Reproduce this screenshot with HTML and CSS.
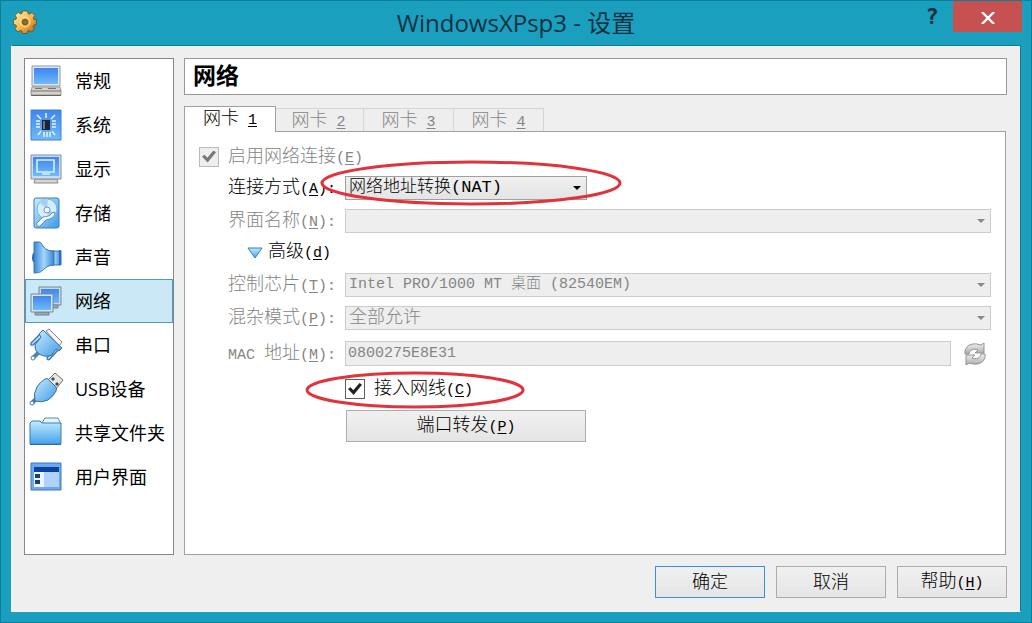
FILE: index.html
```
<!DOCTYPE html>
<html lang="zh-CN">
<head>
    <meta charset="UTF-8">
    <meta name="viewport" content="width=device-width, initial-scale=1.0">
    <title>WindowsXPsp3 - 设置</title>
    <link rel="stylesheet" href="styles.css">
</head>
<body>
    <!-- gradients shared by the icons -->
    <svg class="defs" width="0" height="0" aria-hidden="true">
        <defs>
            <linearGradient id="blue" x1="0" y1="0" x2="0" y2="1">
                <stop offset="0" stop-color="#3f86ec"/>
                <stop offset="1" stop-color="#6fb9fb"/>
            </linearGradient>
            <linearGradient id="sky" x1="0" y1="0" x2="1" y2="1">
                <stop offset="0" stop-color="#c9ecff"/>
                <stop offset="1" stop-color="#3f9ae8"/>
            </linearGradient>
            <linearGradient id="folder" x1="0" y1="0" x2="0" y2="1">
                <stop offset="0" stop-color="#c2eafe"/>
                <stop offset="1" stop-color="#45a4ee"/>
            </linearGradient>
            <linearGradient id="horn" x1="0" y1="0" x2="1" y2="0">
                <stop offset="0" stop-color="#3f86d2"/>
                <stop offset="0.5" stop-color="#a3d8fb"/>
                <stop offset="1" stop-color="#3b86d4"/>
            </linearGradient>
            <linearGradient id="gold" x1="0" y1="0" x2="1" y2="1">
                <stop offset="0" stop-color="#fff0bc"/>
                <stop offset="0.5" stop-color="#f8b94e"/>
                <stop offset="1" stop-color="#b95b10"/>
            </linearGradient>
            <linearGradient id="silver" x1="0" y1="0" x2="0" y2="1">
                <stop offset="0" stop-color="#f2f2f2"/>
                <stop offset="1" stop-color="#aaa"/>
            </linearGradient>
        </defs>
    </svg>

    <div class="window">
        <header class="titlebar">
            <svg class="app-icon" viewBox="0 0 24 24">
                <g fill="url(#gold)" stroke="#70420f" stroke-width="0.8">
                    <path d="M9.500 1h5l.5 2.600 1.500.6L19 2.500 22 5.500l-1.700 2.300.6 1.600 2.500.5v4.800l-2.500.5-.7 1.600L21.500 19l-3 3-2.300-1.500-1.600.7-.6 2.300H9.500l-.6-2.400-1.600-.7L5 22l-3-3.200 1.500-2.200-.7-1.600-2.300-.5V9.800L3 9.200l.6-1.500L2 5.300 5.200 2.300l2.300 1.600 1.500-.6z"/>
                    <circle cx="12" cy="12" r="2.800" fill="#7b7440"/>
                </g>
                <circle cx="12" cy="12" r="5" fill="none" stroke="#ffe3a0" stroke-width="1"/>
            </svg>
            <h1>WindowsXPsp3 - 设置</h1>
            <div class="window-buttons">
                <button class="help" aria-label="帮助">?</button>
                <button class="close" aria-label="关闭">
                    <svg width="14" height="12" viewBox="0 0 14 12"><path d="M1 0l12 12M13 0L1 12" stroke="#fff" stroke-width="2.400"/></svg>
                </button>
            </div>
        </header>

        <div class="content">
            <div class="columns">
                <nav class="sidebar">
                    <a href="#">
                        <svg viewBox="0 0 32 32">
                            <path d="M2 1h28v20H2z" fill="#dce9f6" stroke="#8999ab"/>
                            <path d="M4 3h24v16H4z" fill="url(#blue)"/>
                            <path d="M2 22h28l1 4v4H1v-4z" fill="#d4d0cb" stroke="#9a9793"/>
                            <path d="M1 26h30M5 23.500h7M18 23.500h8" stroke="#77736f"/>
                            <path d="M1 30.500h30" stroke="#66625e"/>
                        </svg>常规</a>
                    <a href="#">
                        <svg viewBox="0 0 32 32">
                            <path d="M1 1h30v30H1z" fill="url(#blue)" stroke="#3c83c8"/>
                            <path d="M12 11h8v10h-8z" fill="#1d2530"/>
                            <path d="M13 12h2v8h-2z" fill="#6a7580"/>
                            <path d="M6 12h4M6 15h4M6 18h4M22 12h4M22 15h4M22 18h4M16 4v5M14 23v5M17 23v5M20 23v5M7 6l4 4M25 6l-4 4M8 26l3-4M25 26l-3-4" stroke="#e4f5ff" stroke-width="1.500"/>
                        </svg>系统</a>
                    <a href="#">
                        <svg viewBox="0 0 32 32">
                            <path d="M5 26h22l1 4H4z" fill="#d8d5cf" stroke="#8c8983"/>
                            <path d="M1 2h30v24H1z" fill="#cbdcef" stroke="#7c91a9"/>
                            <path d="M3 4h26v19H3z" fill="url(#blue)"/>
                            <path d="M7 7h17v12H7zM12 21h8" fill="none" stroke="#d9efff" stroke-width="1.600"/>
                        </svg>显示</a>
                    <a href="#">
                        <svg viewBox="0 0 32 32">
                            <rect x="4" y="1" width="25" height="30" rx="2" fill="url(#sky)" stroke="#397fb9"/>
                            <circle cx="17" cy="12" r="10" fill="#d6edfb" stroke="#72b5e5"/>
                            <path d="M17 12L9 5a10 10 0 0 1 9-3zM17 12l9 5a10 10 0 0 1-7 5z" fill="#a5d2f3"/>
                            <circle cx="17" cy="13" r="3" fill="#fff" stroke="#579bd4"/>
                            <path d="M25 15c0 5-4 7-9 8l-6 6c-2 1-4-1-3-3l6-6c4-1 6 0 9-4z" fill="#eef8ff" stroke="#568fc0"/>
                        </svg>存储</a>
                    <a href="#">
                        <svg viewBox="0 0 32 32">
                            <path d="M4 12v9H3q-2-4 0-9z" fill="#246bb8"/>
                            <path d="M18 10h13v14H18z" fill="url(#horn)" stroke="#3776b5"/>
                            <path d="M4 1h5c2 0 3 2 4 4 2 3 5 5 11 5v14c-5 0-8 2-11 5-2 2-4 3-9 3z" fill="url(#horn)" stroke="#3776b5"/>
                            <path d="M29 9h2v15h-2z" fill="#2b72bd"/>
                        </svg>声音</a>
                    <a href="#" class="active">
                        <svg viewBox="0 0 32 32">
                            <path d="M9 2h22v18H9z" fill="#ccd9e5" stroke="#71899e"/>
                            <path d="M11 4h18v14H11z" fill="url(#blue)"/>
                            <path d="M21 20h7v3h-7zM5 27h14v3H5z" fill="#9ba9b4" stroke="#73818e"/>
                            <path d="M1 9h22v18H1z" fill="#d8e5f0" stroke="#71899e"/>
                            <path d="M3 11h18v14H3z" fill="url(#blue)"/>
                        </svg>网络</a>
                    <a href="#">
                        <svg viewBox="0 0 32 32">
                            <path d="M16 2l3-2 13 13-3 4z" fill="#f4f4f4" stroke="#858585"/>
                            <path d="M10 5L1 14q-1 3 2 2l8-7M29 20l-9 10q-3 2-3-1l8-10" fill="#b7dcf5" stroke="#376d9c" stroke-width="1.200"/>
                            <path d="M9 23l-6 6" stroke="#4d86b5" stroke-width="4"/>
                            <path d="M13 1l19 18-3 3-3-2-4 6q-6 3-13-1-5-4-4-9l6-8-2-3z" fill="url(#sky)" stroke="#356f9f"/>
                            <circle cx="3" cy="29" r="2" fill="#fff" stroke="#5b7e9b"/>
                        </svg>串口</a>
                    <a href="#">
                        <svg viewBox="0 0 32 32">
                            <path d="M17 8l8-8 8 7-7 9z" fill="#e9e6e4" stroke="#6f6d6d"/>
                            <path d="M23 4l2 2-2 2-2-2zM27 9l2 2-2 2-2-2z" fill="#4b4747"/>
                            <path d="M6 26l-4 4" stroke="#3f7cae" stroke-width="4"/>
                            <path d="M15 6q2-1 3 0l8 8q1 2 0 4-3 6-8 9-6 3-13 1-2-8 2-14 3-5 8-8z" fill="url(#sky)" stroke="#356f9f"/>
                            <circle cx="2" cy="30" r="2" fill="#fff" stroke="#4a7da8"/>
                        </svg>USB设备</a>
                    <a href="#">
                        <svg viewBox="0 0 32 32">
                            <path d="M12 6l3-5h13l2 4v5H12z" fill="#e6f4fd" stroke="#568bb5"/>
                            <path d="M0 6l2-2h8l2 2h19v21H0z" fill="url(#folder)" stroke="#3a7eb4"/>
                            <path d="M0 27.500h31" stroke="#3d6b94"/>
                        </svg>共享文件夹</a>
                    <a href="#">
                        <svg viewBox="0 0 32 32">
                            <path d="M1 2h30v27H1z" fill="#6ba9ef" stroke="#3c7abc"/>
                            <path d="M4 7h25v19H4z" fill="#b1d0fa"/>
                            <path d="M4 6h25v5H4z" fill="#0a429d"/>
                            <path d="M4 11h10v15H4z" fill="#edf6ff"/>
                            <path d="M5 13h5v4H5zM5 19h5v4H5z" fill="#163f79"/>
                        </svg>用户界面</a>
                </nav>

                <main class="main">
                    <h2>网络</h2>
                    <div class="tabs" role="tablist">
                        <button class="tab selected" role="tab">网卡<span class="en"> <u>1</u></span></button>
                        <button class="tab" role="tab" disabled>网卡<span class="en"> <u>2</u></span></button>
                        <button class="tab" role="tab" disabled>网卡<span class="en"> <u>3</u></span></button>
                        <button class="tab" role="tab" disabled>网卡<span class="en"> <u>4</u></span></button>
                    </div>
                    <form class="panel">
                        <div class="check-row disabled">
                            <input type="checkbox" id="enable" checked disabled>
                            <label for="enable">启用网络连接<span class="en">(<u>E</u>)</span></label>
                        </div>
                        <div class="fields">
                            <label for="attach">连接方式<span class="en">(<u>A</u>):</span></label>
                            <div class="combo short">
                                <select id="attach"><option>网络地址转换(NAT)</option></select>
                                <svg class="ring ring-attach" viewBox="0 0 304 47"><ellipse cx="152" cy="23" rx="149" ry="21"/></svg>
                            </div>

                            <label for="name" class="disabled">界面名称<span class="en">(<u>N</u>):</span></label>
                            <div class="combo disabled"><select id="name" disabled><option></option></select></div>

                            <button type="button" class="advanced">
                                <svg width="16" height="12" viewBox="0 0 16 12"><path d="M1 1h14L8 11z" fill="url(#folder)" stroke="#2f7fbd"/></svg>
                                <span>高级<span class="en">(<u>d</u>)</span></span>
                            </button>

                            <label for="chip" class="disabled">控制芯片<span class="en">(<u>T</u>):</span></label>
                            <div class="combo latin disabled"><select id="chip" disabled><option>Intel PRO/1000 MT 桌面 (82540EM)</option></select></div>

                            <label for="promisc" class="disabled">混杂模式<span class="en">(<u>P</u>):</span></label>
                            <div class="combo disabled"><select id="promisc" disabled><option>全部允许</option></select></div>

                            <label for="mac" class="disabled"><span class="en">MAC </span>地址<span class="en">(<u>M</u>):</span></label>
                            <div class="mac-row">
                                <input type="text" id="mac" value="0800275E8E31" disabled>
                                <button type="button" class="refresh" aria-label="刷新" disabled>
                                    <svg viewBox="0 0 24 24">
                                        <g fill="url(#silver)" stroke="#8b8b8b" stroke-width="0.9">
                                            <path d="M2 12C1 5 7 1 14 2l4 1 3-2v10H12l3-3c-5-2-8 0-9 4z"/>
                                            <path d="M22 12c1 7-5 11-12 10l-4-1-3 2V13h9l-3 3c5 2 8 0 9-4z"/>
                                        </g>
                                    </svg>
                                </button>
                            </div>

                            <div class="check-row cable">
                                <input type="checkbox" id="cable" checked>
                                <label for="cable">接入网线<span class="en">(<u>C</u>)</span></label>
                                <svg class="ring ring-cable" viewBox="0 0 220 40"><ellipse cx="110" cy="20" rx="108" ry="17"/></svg>
                            </div>

                            <button type="button" class="push forward">端口转发<span class="en">(<u>P</u>)</span></button>
                        </div>
                    </form>
                </main>
            </div>

            <footer class="footer">
                <button class="push default">确定</button>
                <button class="push">取消</button>
                <button class="push">帮助<span class="en">(<u>H</u>)</span></button>
            </footer>
        </div>
    </div>
</body>
</html>
```
FILE: styles.css
```
* {
    box-sizing: border-box;
}

body {
    margin: 0;
    font-family: "Liberation Mono", "Noto Sans CJK SC", monospace;
    font-size: 18px;
    font-weight: 300;
    line-height: 22px;
    color: #000;
}

button, select, input {
    font: inherit;
    color: inherit;
    margin: 0;
}

button {
    padding: 0;
}

.defs {
    position: absolute;
}

/* half-width letters next to the Chinese text */
.en {
    font-size: 15px;
    white-space: pre;
}

u {
    text-underline-offset: 2px;
    text-decoration-thickness: 1px;
}

.disabled {
    color: #858585;
}

.window {
    display: flex;
    flex-direction: column;
    min-height: 100vh;
    padding: 0 10px 10px;
    background: #1a9fbf;
    border: 1px solid #087f9d;
}

.titlebar {
    display: grid;
    grid-template-columns: 1fr auto 1fr;
    align-items: center;
    height: 44px;
    font-family: "Open Sans", "Noto Sans CJK SC", sans-serif;
    color: #12303f;
}

.titlebar h1 {
    margin: 0;
    font-size: 24px;
    font-weight: 400;
    line-height: 44px;
}

.app-icon {
    width: 24px;
    height: 24px;
    margin: 0 0 3px 2px;
}

.window-buttons {
    display: flex;
    justify-content: flex-end;
    align-self: start;
    margin-right: -1px;
}

.window-buttons button {
    height: 31px;
    border: none;
    background: none;
}

.window-buttons .help {
    width: 42px;
    font-family: "DejaVu Sans Mono", monospace;
    font-size: 22px;
    font-weight: bold;
}

.window-buttons .close {
    width: 69px;
    background: #c75050;
}

.content {
    flex: 1;
    display: flex;
    flex-direction: column;
    gap: 11px;
    padding: 12px 13px 13px 12px;
    background: #efefef;
    border: 1px solid #f8f8f8;
    border-top-color: #0d7d98;
    border-right-color: #0d7d98;
}

.columns {
    flex: 1;
    display: flex;
    gap: 10px;
}

.sidebar {
    width: 150px;
    background: #fff;
    border: 1px solid #828790;
    font-family: "Open Sans", "Noto Sans CJK SC", sans-serif;
    font-weight: 400;
}

.sidebar a {
    display: flex;
    align-items: center;
    gap: 13px;
    height: 44px;
    padding-left: 4px;
    border: 1px solid transparent;
    color: #000;
    text-decoration: none;
    white-space: nowrap;
}

.sidebar a.active {
    background: #cbe8f6;
    border-color: #4a9cc4;
}

.sidebar svg {
    flex: none;
    width: 32px;
    height: 32px;
    overflow: visible;
}

.main {
    flex: 1;
    display: flex;
    flex-direction: column;
}

.main h2 {
    margin: 0 0 11px;
    padding: 4px 8px 0;
    font-size: 23px;
    font-weight: bold;
    line-height: 31px;
    background: #fff;
    border: 1px solid #999;
}

.tabs {
    display: flex;
    align-items: flex-end;
}

.tab {
    width: 90px;
    height: 23px;
    padding-top: 1px;
    background: #eee;
    border: 1px solid #d5d5d5;
    border-left: none;
    border-bottom: none;
    color: #858585;
}

.tab.selected {
    position: relative;
    width: 92px;
    height: 26px;
    margin: 0 -2px -1px 0;
    background: #fff;
    border: 1px solid #a0a0a0;
    border-bottom: none;
    color: #000;
}

.panel {
    flex: 1;
    padding: 14px;
    margin-right: 1px;
    background: #fff;
    border: 1px solid #a0a0a0;
}

.check-row {
    display: flex;
    align-items: center;
    gap: 9px;
    height: 21px;
}

input[type="checkbox"] {
    appearance: none;
    display: grid;
    place-items: center;
    width: 20px;
    height: 20px;
    background: #fff;
    border: 1px solid #606060;
}

input[type="checkbox"]:checked::before {
    content: "";
    width: 14px;
    height: 12px;
    background: #222;
    clip-path: polygon(0 50%, 18% 35%, 38% 60%, 82% 0, 100% 14%, 40% 100%);
}

input[type="checkbox"]:disabled {
    background: #eee;
    border-color: #bbb;
}

input[type="checkbox"]:disabled::before {
    background: #777;
}

.check-row label {
    padding-top: 2px;
}

.fields {
    display: grid;
    grid-template-columns: 108px 1fr;
    column-gap: 9px;
    row-gap: 9px;
    align-items: center;
    margin: 9px 0 0 29px;
}

.fields > label {
    height: 24px;
    padding-top: 1px;
    white-space: nowrap;
}

.combo {
    position: relative;
    height: 24px;
}

.combo.short {
    width: 242px;
}

.combo select {
    appearance: none;
    display: block;
    width: 100%;
    height: 24px;
    padding: 0 24px 0 3px;
    background: linear-gradient(#f0f0f0, #e4e4e4);
    border: 1px solid #a0a0a0;
    border-radius: 0;
    opacity: 1;
}

.combo.short select {
    font-size: 17px;
}

.combo.latin select {
    font-size: 15px;
}

.combo.disabled select {
    background: #eee;
    border-color: #ccc;
}

.combo::after {
    content: "";
    position: absolute;
    right: 6px;
    top: 10px;
    border: 4px solid transparent;
    border-top-color: #000;
    border-bottom: none;
    pointer-events: none;
}

.combo.disabled::after {
    border-top-color: #888;
}

.advanced {
    grid-column: 1 / -1;
    justify-self: start;
    display: flex;
    align-items: center;
    gap: 5px;
    height: 22px;
    margin-left: 19px;
    background: none;
    border: none;
}

.mac-row {
    display: flex;
    align-items: center;
    gap: 12px;
    height: 29px;
}

.mac-row input {
    flex: 1;
    min-width: 0;
    height: 25px;
    padding: 0 2px;
    background: #eee;
    border: 1px solid #ccc;
    color: #858585;
    font-size: 15px;
}

.refresh {
    width: 24px;
    height: 24px;
    margin-right: 4px;
    background: none;
    border: none;
}

.refresh svg {
    display: block;
}

.cable {
    position: relative;
    grid-column: 2;
    justify-self: start;
    height: 24px;
}

.ring {
    position: absolute;
    z-index: 1;
    fill: none;
    stroke: #e0333c;
    stroke-width: 3px;
    pointer-events: none;
}

.ring-attach {
    left: -26px;
    top: -16px;
    width: 304px;
    height: 47px;
}

.ring-cable {
    left: -40px;
    top: -7px;
    width: 220px;
    height: 40px;
}

.push {
    width: 110px;
    height: 32px;
    padding-top: 2px;
    background: linear-gradient(#f0f0f0, #e5e5e5);
    border: 1px solid #acacac;
}

.push.default {
    border-color: #3c8fdc;
}

.forward {
    grid-column: 2;
    width: 240px;
    margin-left: 1px;
}

.footer {
    display: flex;
    justify-content: flex-end;
    gap: 11px;
}
```
